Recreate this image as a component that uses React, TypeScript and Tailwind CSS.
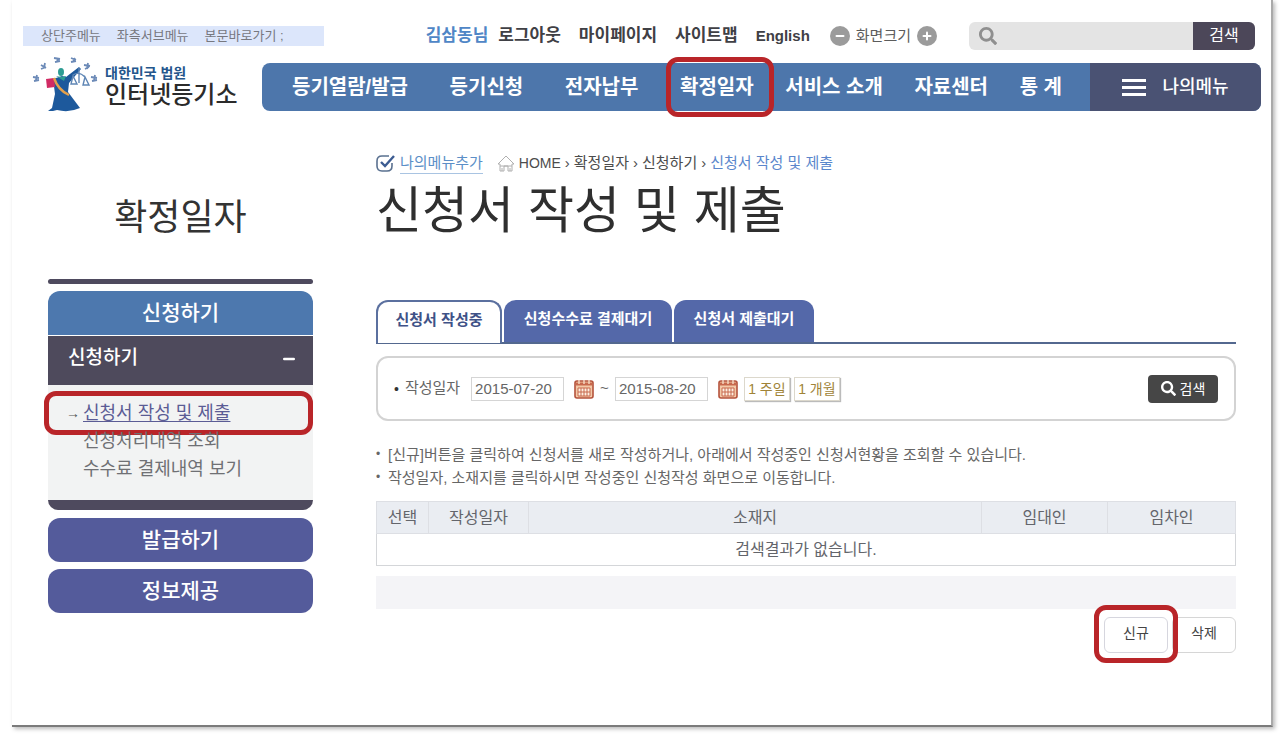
import { FaSearch } from "react-icons/fa"
import { FiMinus, FiPlus } from "react-icons/fi"

interface NavItem {
  label: string
  wide?: boolean
  marked?: boolean
}

interface SideLink {
  label: string
  current?: boolean
}

const skipLinks = ["상단주메뉴", "좌측서브메뉴", "본문바로가기 ;"]

const userLinks = ["마이페이지", "사이트맵", "English"]

const navItems: NavItem[] = [
  { label: "등기열람/발급", wide: true },
  { label: "등기신청", wide: true },
  { label: "전자납부", wide: true },
  { label: "확정일자", marked: true },
  { label: "서비스 소개" },
  { label: "자료센터" },
  { label: "통 계" },
]

const sideLinks: SideLink[] = [
  { label: "신청서 작성 및 제출", current: true },
  { label: "신청처리내역 조회" },
  { label: "수수료 결제내역 보기" },
]

const notes = [
  "[신규]버튼을 클릭하여 신청서를 새로 작성하거나, 아래에서 작성중인 신청서현황을 조회할 수 있습니다.",
  "작성일자, 소재지를 클릭하시면 작성중인 신청작성 화면으로 이동합니다.",
]

const LogoMark = () => (
  <svg viewBox="0 0 70 60" className="h-15 w-[70px] shrink-0" aria-hidden="true">
    <g fill="none" stroke="#6d8bb8" strokeWidth="1.8">
      <path d="M1 20l6 1M2 24l5-1M5 18l-1 5" />
      <path d="M9 8l5 3M9 12l5-2M13 6l-1 5" />
      <path d="M22 1l6 1M23 5l5-1M26 1l-1 4" />
      <path d="M39 1l5 2M39 5l5-1M43 1l-2 4" />
      <path d="M52 8l6 1M53 12l4-2M56 6l-1 6" />
      <path d="M59 20l6 1M60 24l5-1M63 18l-1 6" />
    </g>
    <ellipse cx="29" cy="15" rx="3" ry="4" fill="#2d9c93" />
    <path
      d="M21 22l9-3 4 1 13-10 2 2-12 14-1 9 12 16q-11 5-23 2l-4 1h-5l4-3 3-14z"
      fill="#1d599c"
    />
    <path d="M24 19l5 1 5-1-2 5z" fill="#2d9c93" />
    <path d="M14 22l8-1 1 9-8 1z" fill="#d12b64" />
    <path d="M22 21q4 12 15 17" fill="none" stroke="#e3a04c" strokeWidth="2.4" />
    <path
      d="M47 11v15M41 18q6-4 12 2M41 19l-2 8h6zM53 20l-2 8h6z"
      fill="none"
      stroke="#5f86b5"
      strokeWidth="1.4"
    />
  </svg>
)

const CheckIcon = () => (
  <svg viewBox="0 0 20 18" className="h-[18px] w-5" fill="none" aria-hidden="true">
    <path d="M16 9v3q0 5-5 5H6q-5 0-5-5V7q0-5 5-5h7" stroke="#5a7190" strokeWidth="1.6" />
    <path d="M5 8l4 4 9-10" stroke="#3c5c92" strokeWidth="2.4" />
  </svg>
)

const HomeIcon = () => (
  <svg viewBox="0 0 18 17" className="h-[17px] w-[18px]" fill="none" stroke="#b0b0b0" aria-hidden="true">
    <path d="M1 9l8-8 8 8h-2v7h-4v-5H7v5H3V9z" />
    <path d="M3 11h12M5 13v3M13 13v3" />
  </svg>
)

const CalendarIcon = () => (
  <svg viewBox="0 0 20 20" className="h-5 w-5" aria-hidden="true">
    <rect x="1" y="2" width="18" height="17" rx="2" fill="#f3c9a8" stroke="#b5533c" strokeWidth="1.6" />
    <path d="M2 5h16" stroke="#c8694d" strokeWidth="3" />
    <path d="M5 1v4M10 1v4M15 1v4" stroke="#f6dcc6" strokeWidth="1.4" />
    <path d="M4 9h12v8H4zM4 13h12M7 9v8M10 9v8M13 9v8" fill="#fdf0e2" stroke="#c8694d" />
  </svg>
)

const Header = () => (
  <header>
    <div className="flex h-7 items-center">
      <nav
        aria-label="건너뛰기"
        className="ml-[23px] flex h-5 w-[301px] items-center gap-4 bg-[#dce6fb] pl-[18px] text-[13px] text-[#77787f]"
      >
        {skipLinks.map((label) => (
          <a key={label} href="#content">
            {label}
          </a>
        ))}
      </nav>
      <div className="ml-auto flex items-center gap-[18px] text-[17px] font-bold text-[#3f4045]">
        <div className="flex gap-2.5">
          <a href="#user" className="text-[#4f86c6]">
            김삼동님
          </a>
          <a href="#logout">로그아웃</a>
        </div>
        {userLinks.map((label) => (
          <a key={label} href="#user" className={label === "English" ? "text-[15px]" : ""}>
            {label}
          </a>
        ))}
      </div>
      <div className="mx-5 flex items-center gap-1.5 text-[15px] text-[#5c5c5c]">
        <button aria-label="화면 축소" className="rounded-full bg-[#9b9b9b] p-1 text-white">
          <FiMinus size={12} strokeWidth={4} />
        </button>
        <span>화면크기</span>
        <button aria-label="화면 확대" className="rounded-full bg-[#9b9b9b] p-1 text-white">
          <FiPlus size={12} strokeWidth={4} />
        </button>
      </div>
      <form className="mr-4 ml-3 flex h-7 w-[286px] overflow-hidden rounded-md bg-[#e4e4e4]">
        <label htmlFor="site-search" className="flex items-center pl-2.5 text-[#8f8f8f]">
          <FaSearch size={18} title="통합검색" />
        </label>
        <input id="site-search" className="min-w-0 flex-1 bg-transparent px-2 text-sm outline-none" />
        <button type="button" className="w-[62px] bg-[#4c4759] text-base text-white">
          검색
        </button>
      </form>
    </div>

    <div className="mt-[5px] flex h-16 items-center">
      <a href="#home" className="ml-8 flex w-[230px] shrink-0 items-center">
        <LogoMark />
        <span className="ml-[3px] flex flex-col">
          <span className="text-sm leading-4 font-bold text-[#24568c]">대한민국 법원</span>
          <span className="text-2xl leading-7 font-medium text-[#2b2b2b]">인터넷등기소</span>
        </span>
      </a>
      <nav className="mr-2.5 flex h-12 flex-1 rounded-lg bg-[#4d76ab] text-white">
        <ul className="flex flex-1 items-center justify-between pr-7 pl-[30px] text-xl font-bold">
          {navItems.map(({ label, wide, marked }) => (
            <li key={label} className={wide ? "pr-2.5" : "relative"}>
              <a href="#menu">{label}</a>
              {marked && (
                <span className="pointer-events-none absolute -inset-y-4 -right-5 -left-3.5 rounded-xl border-[5px] border-[#b92529]" />
              )}
            </li>
          ))}
        </ul>
        <button className="flex w-[171px] items-center justify-center gap-4 rounded-r-lg bg-[#4a5273] text-lg font-medium">
          <span className="flex w-6 flex-col gap-1">
            <span className="h-[3px] bg-white" />
            <span className="h-[3px] bg-white" />
            <span className="h-[3px] bg-white" />
          </span>
          나의메뉴
        </button>
      </nav>
    </div>
  </header>
)

const Sidebar = () => (
  <aside className="w-[265px] shrink-0">
    <h2 className="mt-10 text-center text-4xl leading-[54px] text-[#333]">확정일자</h2>
    <div className="mt-[34px] h-[5px] rounded-full bg-[#4e4a5e]" />
    <div className="mt-[7px]">
      <a
        href="#apply"
        className="flex h-11 items-center justify-center rounded-t-xl bg-[#4d78ae] text-[21px] font-medium text-white"
      >
        신청하기
      </a>
      <button className="mt-px flex h-[49px] w-full items-center justify-between bg-[#4e4a5c] pr-4 pb-1 pl-5 text-[19px] font-medium text-white">
        신청하기
        <FiMinus size={16} strokeWidth={4} />
      </button>
      <ul className="flex h-[115px] flex-col bg-[#f2f3f3] pt-3.5 text-lg leading-7 text-[#6f7074]">
        {sideLinks.map(({ label, current }) => (
          <li key={label} className="relative">
            {current ? (
              <>
                <a href="#write" className="flex text-[#5b5c95]">
                  <span className="w-[35px] pl-[18px] text-sm leading-7 text-[#555]">→</span>
                  <span className="underline underline-offset-2">{label}</span>
                </a>
                <span className="pointer-events-none absolute -top-2 right-0 -bottom-2 -left-1 rounded-xl border-[5px] border-[#b92529]" />
              </>
            ) : (
              <a href="#list" className="block pl-[35px]">
                {label}
              </a>
            )}
          </li>
        ))}
      </ul>
      <div className="h-[10px] rounded-b-xl bg-[#4e4a5e]" />
    </div>
    <a
      href="#issue"
      className="mt-2 flex h-11 items-center justify-center rounded-xl bg-[#545b9b] text-[21px] font-medium text-white"
    >
      발급하기
    </a>
    <a
      href="#info"
      className="mt-[7px] flex h-11 items-center justify-center rounded-xl bg-[#545b9b] text-[21px] font-medium text-white"
    >
      정보제공
    </a>
  </aside>
)

const Breadcrumb = () => (
  <div className="flex h-6 items-center text-[15px] text-[#4c4c4c]">
    <button className="flex items-center gap-1 text-[#5c8fc7]">
      <CheckIcon />
      <span className="border-b border-[#a9c4e2] leading-5">나의메뉴추가</span>
    </button>
    <nav aria-label="현재 위치" className="ml-3.5 flex items-center gap-1">
      <HomeIcon />
      <a href="#home" className="text-sm">
        HOME
      </a>
      <span>›</span>
      <a href="#fixed">확정일자</a>
      <span>›</span>
      <a href="#apply">신청하기</a>
      <span>›</span>
      <a href="#write" className="text-[#5a86cc]">
        신청서 작성 및 제출
      </a>
    </nav>
  </div>
)

const Tabs = () => (
  <div role="tablist" className="mt-[57px] flex gap-0.5 border-b-2 border-[#53688f] text-[15px] font-bold">
    <button
      role="tab"
      aria-selected="true"
      className="-mb-0.5 h-[43px] w-[126px] rounded-t-xl border-2 border-b-0 border-[#5b709f] bg-white pb-1 text-[#3f5287]"
    >
      신청서 작성중
    </button>
    <button role="tab" aria-selected="false" className="h-[42px] w-[168px] rounded-t-xl bg-[#5468a9] pb-1 text-white">
      신청수수료 결제대기
    </button>
    <button role="tab" aria-selected="false" className="h-[42px] w-[140px] rounded-t-xl bg-[#5468a9] pb-1 text-white">
      신청서 제출대기
    </button>
  </div>
)

const DateSearch = () => (
  <form className="mt-3 flex h-[65px] items-center rounded-xl border-2 border-[#d3d3d3] px-4 text-[15px] text-[#666]">
    <span className="mr-1.5 text-sm text-[#333]">•</span>
    <label htmlFor="date-from">작성일자</label>
    <input
      id="date-from"
      defaultValue="2015-07-20"
      className="ml-[11px] h-6 w-[93px] border border-[#d5d5d5] px-[3px] text-[#666] outline-none"
    />
    <button type="button" aria-label="시작일 선택" className="ml-2.5">
      <CalendarIcon />
    </button>
    <span className="mx-1.5">~</span>
    <input
      aria-label="종료일"
      defaultValue="2015-08-20"
      className="h-6 w-[93px] border border-[#d5d5d5] px-[3px] text-[#666] outline-none"
    />
    <button type="button" aria-label="종료일 선택" className="ml-2.5">
      <CalendarIcon />
    </button>
    <button
      type="button"
      className="ml-1.5 h-6 w-[46px] border border-[#dcd8cc] text-sm leading-5 text-[#a08337] shadow-[1px_1px_1px_#bbb]"
    >
      1 주일
    </button>
    <button
      type="button"
      className="ml-1 h-6 w-[46px] border border-[#dcd8cc] text-sm leading-5 text-[#a08337] shadow-[1px_1px_1px_#bbb]"
    >
      1 개월
    </button>
    <button
      type="button"
      className="ml-auto flex h-7 w-[70px] items-center justify-center gap-1 rounded-sm bg-[#464646] text-sm text-white"
    >
      <FaSearch size={15} />
      검색
    </button>
  </form>
)

const ResultTable = () => (
  <table className="mt-3 w-full table-fixed border-collapse border border-[#d4d6d9] text-base text-[#63656b]">
    <colgroup>
      <col className="w-[52px]" />
      <col className="w-[100px]" />
      <col />
      <col className="w-[126px]" />
      <col className="w-[128px]" />
    </colgroup>
    <thead className="bg-[#eaedf2]">
      <tr className="h-8">
        {["선택", "작성일자", "소재지", "임대인", "임차인"].map((label) => (
          <th key={label} scope="col" className="border border-[#dddfe4] p-0 font-normal">
            {label}
          </th>
        ))}
      </tr>
    </thead>
    <tbody>
      <tr className="h-8">
        <td colSpan={5} className="p-0 text-center">
          검색결과가 없습니다.
        </td>
      </tr>
    </tbody>
  </table>
)

const Content = () => (
  <main id="content" className="min-w-0 flex-1">
    <Breadcrumb />
    <h1 className="mt-1 text-[50px] leading-16 text-[#2f2f2f]">신청서 작성 및 제출</h1>
    <Tabs />
    <DateSearch />
    <ul className="mt-[22px] text-[15px] leading-[23px] text-[#666]">
      {notes.map((note) => (
        <li key={note} className="flex">
          <span className="w-3 text-xs leading-[23px]">•</span>
          {note}
        </li>
      ))}
    </ul>
    <ResultTable />
    <div className="mt-2.5 h-[33px] bg-[#f4f4f7]" />
    <div className="mt-2 flex justify-end gap-1 text-sm text-[#444]">
      <div className="relative">
        <button className="h-9 w-16 rounded-md border border-[#d6d6de] pb-1">신규</button>
        <span className="pointer-events-none absolute -inset-x-2.5 -top-3 -bottom-2.5 z-10 rounded-xl border-[5px] border-[#b92529]" />
      </div>
      <button className="h-9 w-16 rounded-md border border-[#d6d6d6] pb-1">삭제</button>
    </div>
  </main>
)

const App = () => {
  return (
    <div className="bg-white pr-[7px] pb-[9px] pl-3 font-['Liberation_Sans','Noto_Sans_CJK_KR',sans-serif]">
      <div className="min-h-[727px] border-r-2 border-b-2 border-r-[#a9a9a9] border-b-[#7b7b7b] pt-[22px] shadow-[2px_2px_4px_#bbb]">
        <div className="-ml-3">
          <Header />
          <div className="mt-8 flex gap-[63px] pr-[35px] pl-12">
            <Sidebar />
            <Content />
          </div>
        </div>
      </div>
    </div>
  )
}

export default App
